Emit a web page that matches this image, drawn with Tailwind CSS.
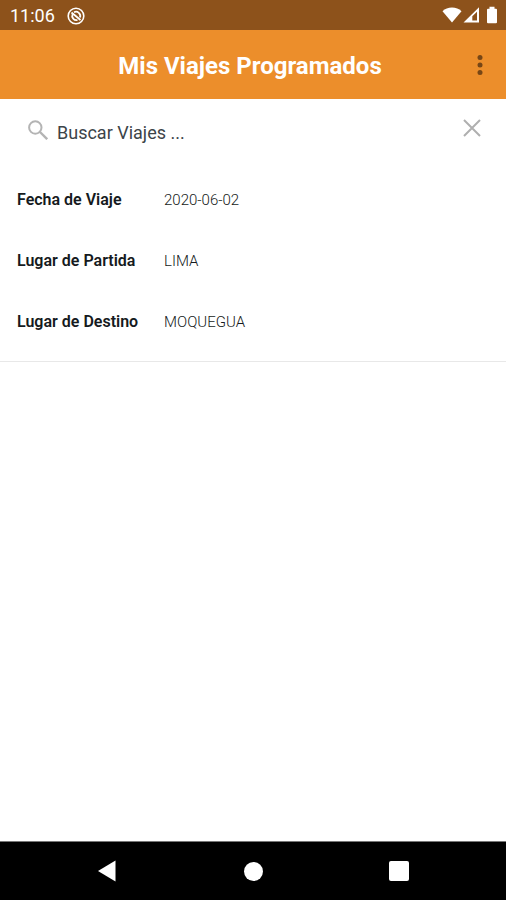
<!DOCTYPE html>
<html lang="es">
<head>
<meta charset="utf-8">
<meta name="viewport" content="width=device-width, initial-scale=1">
<title>Mis Viajes Programados</title>
<script src="https://cdn.jsdelivr.net/npm/@tailwindcss/browser@4"></script>
</head>
<body class="flex min-h-screen flex-col bg-white font-['Roboto',sans-serif] text-[#151a20]">
  <!-- Status bar -->
  <div class="flex h-[30px] items-center justify-between bg-[#8d521b] pl-[10px] pr-2 text-white">
    <div class="flex items-center gap-3 pt-[2px]">
      <span class="text-[18px] leading-6">11:06</span>
      <svg class="size-[18px]" viewBox="0 0 18 18" fill="none" stroke="currentColor" aria-hidden="true">
        <circle cx="9" cy="9" r="7.8" stroke-width="1.6"/>
        <path d="M5.600 7.200A4.200 4.200 0 0 0 10.500 13M7 5.200A4.300 4.300 0 0 1 13 10.500" stroke-width="1.8"/>
        <path d="M4.500 5.500 13.500 13" stroke-width="1.8"/>
      </svg>
    </div>
    <div class="flex items-center gap-px">
      <svg class="h-4 w-5" viewBox="0 0 20 16" fill="currentColor" aria-hidden="true"><path d="M.5 4.200C3 1.900 6.200.600 10 .600s7 1.300 9.500 3.600L10 15.600Z"/></svg>
      <svg class="h-4 w-[17px]" viewBox="0 0 17 16" fill="currentColor" fill-rule="evenodd" aria-hidden="true"><path d="M.5 15.500 16 .3V15.500ZM9.300 9.300V13.600H14V4.700Z"/></svg>
      <svg class="ml-[5px] h-[18px] w-3" viewBox="0 0 12 18" fill="currentColor" aria-hidden="true"><path d="M3.500.8h5v2H10a1 1 0 0 1 1 1V16.200a1 1 0 0 1-1 1H2a1 1 0 0 1-1-1V3.800a1 1 0 0 1 1-1h1.500Z"/></svg>
    </div>
  </div>

  <!-- App bar -->
  <header class="grid h-[69px] grid-cols-[1fr_auto_1fr] items-center bg-[#ec8e2b] pl-2 pr-[14px]">
    <h1 class="col-start-2 pt-[2px] text-[24px] font-bold leading-8 text-white">Mis Viajes Programados</h1>
    <button type="button" aria-label="Más opciones" class="flex h-10 w-6 items-center justify-center justify-self-end text-[#764616]">
      <svg class="h-5 w-[6px]" viewBox="0 0 6 20" fill="currentColor" aria-hidden="true"><circle cx="3" cy="2.500" r="2.500"/><circle cx="3" cy="10" r="2.500"/><circle cx="3" cy="17.500" r="2.500"/></svg>
    </button>
  </header>

  <main class="flex-1">
    <!-- Search -->
    <div class="flex h-[70px] items-start pl-7 pr-6 pt-5">
      <label for="buscar" aria-label="Buscar viajes" class="pt-px text-[#b4b4b4]">
        <svg class="size-5" viewBox="0 0 20 20" fill="none" stroke="currentColor" stroke-width="2" aria-hidden="true"><circle cx="7.300" cy="7.500" r="6.200"/><path d="M12 12 19.200 19.200" stroke-width="2.400"/></svg>
      </label>
      <input id="buscar" type="text" placeholder="Buscar Viajes ..." class="ml-[9px] h-7 min-w-0 flex-1 text-[18px] leading-7 outline-none placeholder:text-[#3c4449]">
      <button type="button" aria-label="Borrar búsqueda" class="text-[#afafaf]">
        <svg class="h-[18px] w-5" viewBox="0 0 20 18" fill="none" stroke="currentColor" stroke-width="2" aria-hidden="true"><path d="M2 1 18 17M18 1 2 17"/></svg>
      </button>
    </div>

    <!-- Trip -->
    <dl class="grid grid-cols-[147px_1fr] items-center gap-y-[37px] border-b border-[#e8e8e8] px-[17px] pb-[27px] pt-[19px] text-[15px] leading-6">
      <dt class="text-[16px] font-semibold">Fecha de Viaje</dt><dd class="font-light">2020-06-02</dd>
      <dt class="text-[16px] font-semibold">Lugar de Partida</dt><dd class="font-light">LIMA</dd>
      <dt class="text-[16px] font-semibold">Lugar de Destino</dt><dd class="font-light">MOQUEGUA</dd>
    </dl>
  </main>

  <!-- System navigation -->
  <nav aria-label="Sistema" class="flex h-[59px] items-center justify-center border-t border-[#777] bg-black text-white">
    <button type="button" aria-label="Atrás" class="flex h-full w-[146px] items-center justify-center"><svg class="h-[22px] w-[18px]" viewBox="0 0 18 22" fill="currentColor" aria-hidden="true"><path d="M17.500.5V21.500L0 11Z"/></svg></button>
    <button type="button" aria-label="Inicio" class="flex h-full w-[146px] items-center justify-center"><span class="size-[19px] rounded-full bg-white"></span></button>
    <button type="button" aria-label="Recientes" class="flex h-full w-[146px] items-center justify-center"><span class="size-5 rounded-[2px] bg-white"></span></button>
  </nav>
</body>
</html>
